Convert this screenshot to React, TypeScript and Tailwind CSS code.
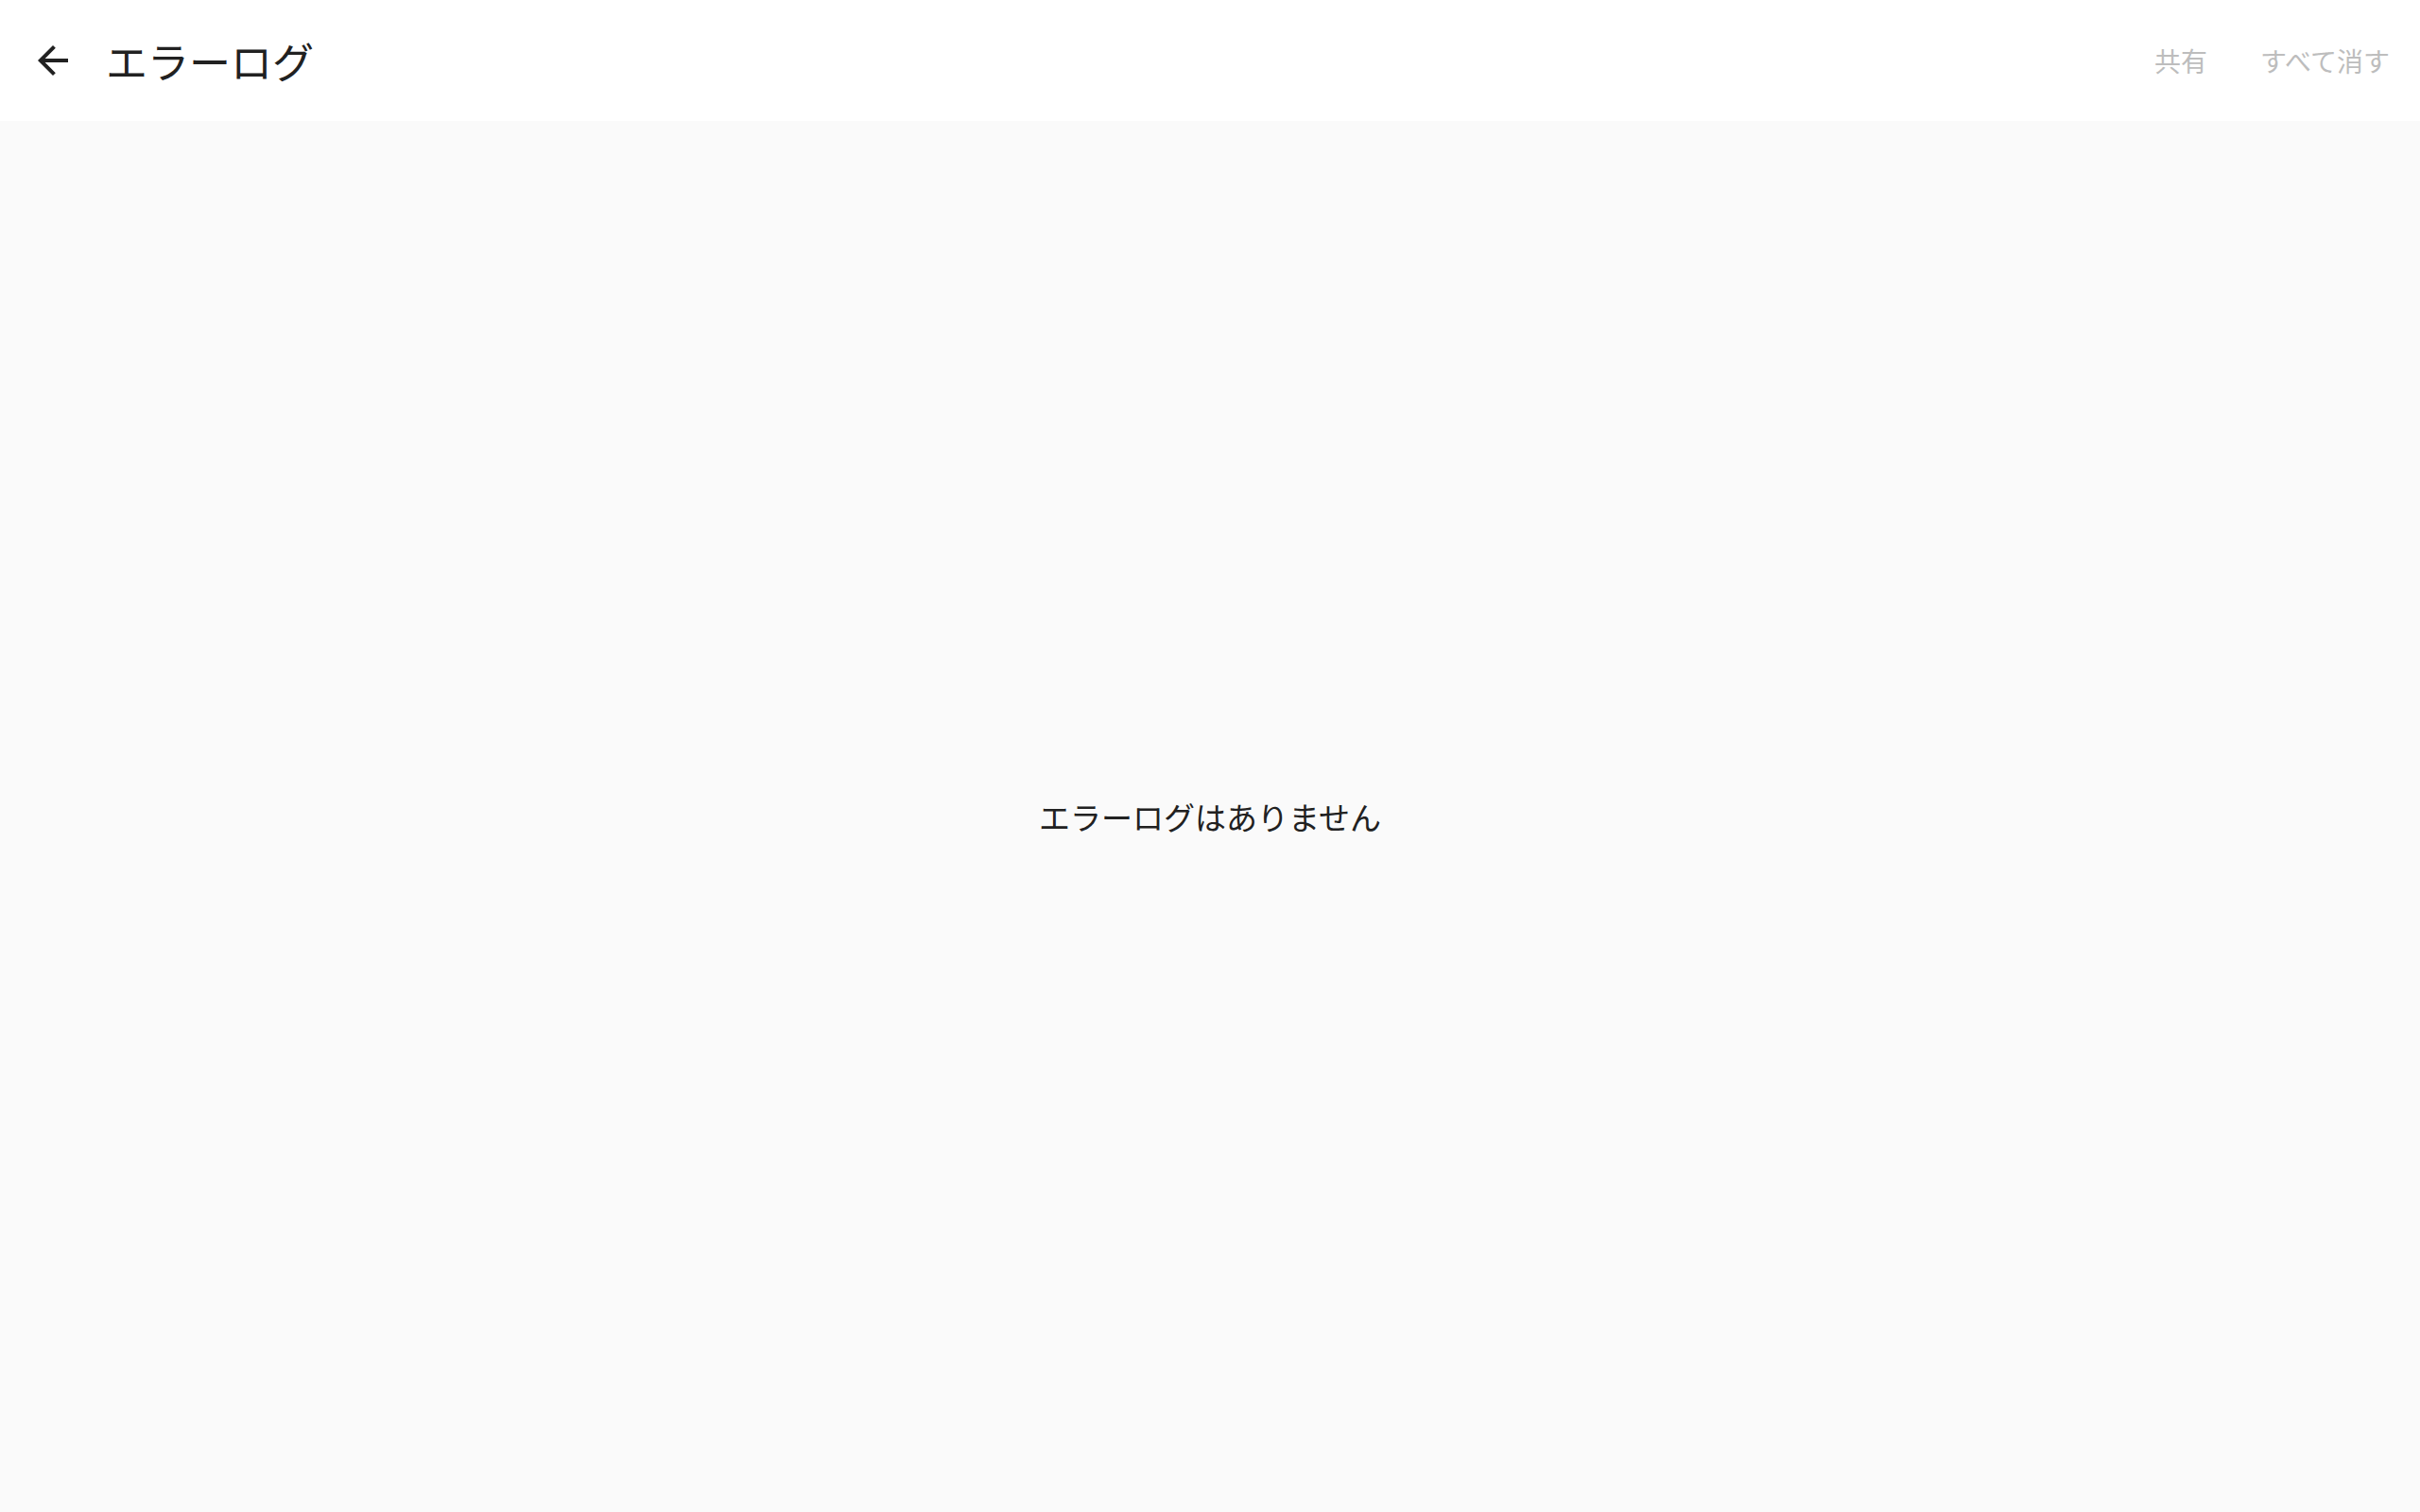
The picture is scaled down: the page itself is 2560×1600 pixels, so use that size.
export default function App() {
  return (
    <div
      className="flex h-[1600px] w-[2560px] flex-col bg-[#fafafa] text-[#212121]"
      style={{ fontFamily: '"Noto Sans CJK JP", "Noto Sans", sans-serif' }}
    >
      <header className="flex h-[128px] shrink-0 items-center bg-white pl-[32px] pr-[16px]">
        <button className="flex h-[48px] w-[48px] items-center justify-center">
          <svg viewBox="0 0 24 24" className="h-[48px] w-[48px]" fill="#212121">
            <path d="M20 11H7.83l5.59-5.59L12 4l-8 8 8 8 1.41-1.41L7.83 13H20v-2z" />
          </svg>
        </button>
        <h1 className="ml-[32px] text-[44px] leading-none font-normal">エラーログ</h1>
        <div className="ml-auto flex items-center gap-[24px] text-[28px] text-[#bdbdbd]">
          <button className="px-[16px] py-[12px]">共有</button>
          <button className="px-[16px] py-[12px]">すべて消す</button>
        </div>
      </header>
      <main className="flex flex-1 items-center justify-center">
        <p className="text-[33px] leading-none">エラーログはありません</p>
      </main>
    </div>
  );
}
